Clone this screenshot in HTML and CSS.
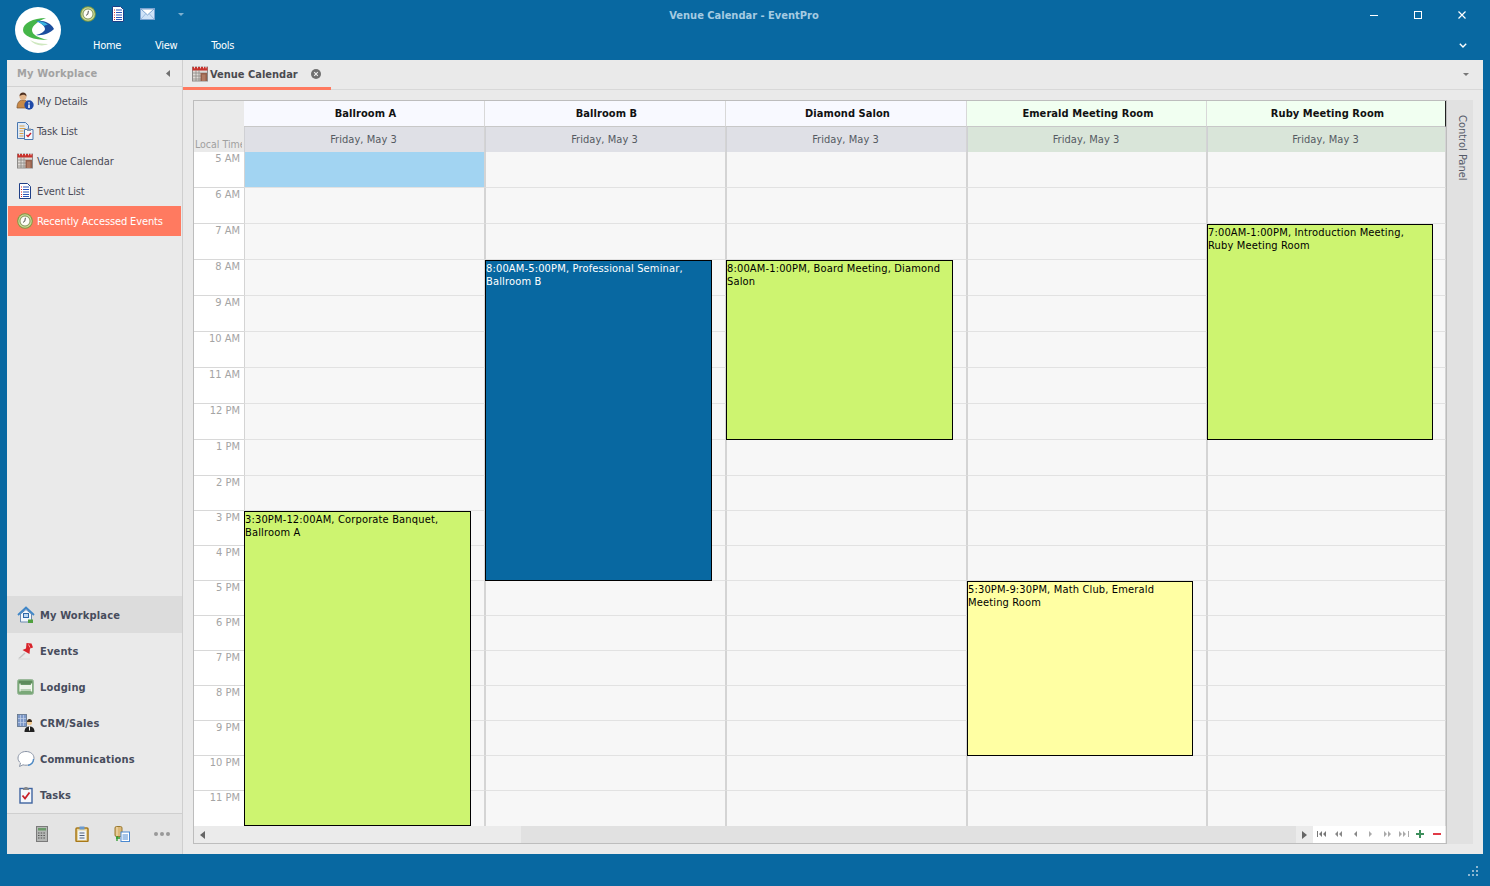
FILE: index.html
```html
<!DOCTYPE html>
<html lang="en">
<head>
<meta charset="utf-8">
<title>Venue Calendar - EventPro</title>
<link rel="stylesheet" href="styles.css">
</head>
<body>
<svg class="defs" width="0" height="0" aria-hidden="true">
  <symbol id="i-clock" viewBox="0 0 16 16">
    <circle cx="8" cy="8" r="7.8" fill="#7f9a3f"/>
    <circle cx="8" cy="8" r="6.8" fill="#c9d89a"/>
    <circle cx="8" cy="8" r="5" fill="#fdfdf6" stroke="#59702a" stroke-width=".7"/>
    <path d="M8.400 4.800 7.800 8.200 6 9.400" fill="none" stroke="#555" stroke-width="1"/>
  </symbol>
  <symbol id="i-list" viewBox="0 0 14 16">
    <path d="M1.500.5h8l3 3v12h-11z" fill="#fff" stroke="#1f3f86"/>
    <path d="M3 4h1M3 6.500h1M3 9h1M3 11.500h1M3 13.500h1" stroke="#d8262a"/>
    <path d="M5 4h6M5 6.500h6M5 9h6M5 11.500h6M5 13.500h6" stroke="#2a55b8"/>
  </symbol>
  <symbol id="i-mail" viewBox="0 0 15 12">
    <rect x=".5" y=".5" width="14" height="11" fill="#cfe3f8" stroke="#7aa3d0"/>
    <path d="M1 1l6.500 6L14 1z" fill="#fff" stroke="#7aa3d0"/>
    <path d="M1 11l4.500-5M14 11 9.500 6" stroke="#9dbce0" fill="none"/>
  </symbol>
  <symbol id="i-cal" viewBox="0 0 16 16">
    <rect x=".5" y="1" width="15" height="14" fill="#dedad6" stroke="#8d8a88"/>
    <rect x=".5" y="1" width="15" height="3.500" fill="#c8322c"/>
    <path d="M2.500.3v2M5.500.3v2M8.500.3v2M11.500.3v2M14 .3v2" stroke="#fff" stroke-width=".8"/>
    <path d="M1 7h14M1 10h14M1 13h14M4 4v11M7 4v11" stroke="#8e8a86" stroke-width=".8"/>
    <rect x="8.500" y="7" width="6.500" height="8" fill="#94604c"/>
    <rect x="10" y="8.500" width="3.500" height="6.500" fill="#b07a62"/>
  </symbol>
</svg>

<div class="app">
  <header class="titlebar">
    <div class="logo">
      <svg width="46" height="46" viewBox="0 0 46 46">
        <path d="M15 33c4 5 12 7 18 4-6 0-12-1-18-4z" fill="#cfe8c0"/>
        <path d="M31 11C18 11 8 16 8 23c0 6 10 10 25 10-9-2-16-5-16-10 0-4 6-9 14-12z" fill="#45b649"/>
        <path d="M21 14c8-1 15 2 18 8-4 4-11 7-18 6 5-1 9-4 9-6 0-3-4-6-9-8z" fill="#1c4f9f"/>
        <path d="M21 14c5 0 9 1 12 4-2 0-3 0-4 1-2-2-5-4-8-5z" fill="#39b3df"/>
      </svg>
    </div>
    <div class="titlebar-main">
      <div class="titlebar-top">
        <div class="quick">
          <svg class="ic16"><use href="#i-clock"/></svg>
          <svg class="ic-list"><use href="#i-list"/></svg>
          <svg class="ic-mail"><use href="#i-mail"/></svg>
          <svg class="ic-drop" viewBox="0 0 6 3"><path d="M0 0h6L3 3z" fill="#7fb0cf"/></svg>
        </div>
        <div class="winbtns">
          <svg viewBox="0 0 10 10"><path d="M1 5.500h8" stroke="#fff" stroke-width="1"/></svg>
          <svg viewBox="0 0 10 10"><rect x="1.500" y="1.500" width="7" height="7" fill="none" stroke="#fff"/></svg>
          <svg viewBox="0 0 10 10"><path d="M1.500 1.500l7 7M8.500 1.500l-7 7" stroke="#fff" stroke-width="1.200"/></svg>
        </div>
      </div>
      <div class="titlebar-menu">
        <nav class="menu"><span>Home</span><span>View</span><span>Tools</span></nav>
        <svg class="chev" viewBox="0 0 8 5"><path d="M.8.800 4 4 7.200.800" fill="none" stroke="#fff" stroke-width="1.400"/></svg>
      </div>
    </div>
    <div class="wintitle">Venue Calendar - EventPro</div>
  </header>

  <div class="body">
    <aside class="sidebar">
      <div class="side-head"><span>My Workplace</span><svg viewBox="0 0 4 7" class="side-arrow"><path d="M4 0v7L0 3.500z" fill="#707070"/></svg></div>
      <ul class="side-items">
        <li>
          <svg class="ic18" viewBox="0 0 18 18"><path d="M1 16c0-5 2-8 6-8s6 3 6 8z" fill="#c98a48" stroke="#7a5230" stroke-width=".7"/><circle cx="7" cy="4.500" r="3.500" fill="#e2b48a"/><path d="M3.500 4.500C3.500 1.500 5 .5 7 .5s3.500 1 3.500 4C9.500 3 8 2.500 6 3 5 3.200 4 3.500 3.500 4.500z" fill="#4f3020"/><circle cx="13" cy="13" r="4.700" fill="#1f4aa8"/><path d="M13 10.200v1.400M13 12.500v3.400" stroke="#fff" stroke-width="1.500"/></svg>
          My Details
        </li>
        <li>
          <svg class="ic18" viewBox="0 0 18 18"><path d="M1.500.5h8l3 3v13h-11z" fill="#dfeaf7" stroke="#4a78b0"/><path d="M3.500 4h5M3.500 6.500h6M3.500 9h4M3.500 11.500h4M3.500 14h4" stroke="#d9a24a"/><path d="M8.500 7.500h8.500v10H8.500z" fill="#f6f8fb" stroke="#4a78b0"/><rect x="11" y="6.500" width="4" height="2.500" fill="#8a9ab0"/><path d="M10.500 13l1.500 1.500 3-3.500" fill="none" stroke="#c8202a" stroke-width="1.400"/></svg>
          Task List
        </li>
        <li><svg class="ic18 pad1"><use href="#i-cal"/></svg>Venue Calendar</li>
        <li><svg class="ic18 pad1"><use href="#i-list"/></svg>Event List</li>
        <li class="active"><svg class="ic18 pad1"><use href="#i-clock"/></svg>Recently Accessed Events</li>
      </ul>
      <div class="side-spacer"></div>
      <ul class="side-nav">
        <li class="selected">
          <svg class="ic18" viewBox="0 0 18 18"><path d="M3.500 8v8h11V8L9 3.500z" fill="#f2f6fb" stroke="#6a8ab0"/><path d="M1 9 9 1.500 17 9" fill="none" stroke="#3f86c8" stroke-width="1.800"/><rect x="6.500" y="7.500" width="5" height="4" fill="#bcd6f0" stroke="#2f68a8"/><rect x="11" y="13.500" width="5" height="3.500" fill="#4fa03e"/></svg>
          My Workplace
        </li>
        <li>
          <svg class="ic18" viewBox="0 0 18 18"><path d="M8 11 2 16.500" stroke="#c4c4c4" stroke-width="1.400"/><path d="M1 17h12" stroke="#dcdcdc" stroke-width="1.200"/><path d="M9.500 1 14.500 1.500 16 5.500l-3 1-.5 5.500L5.500 8l3.500-1.500z" fill="#d8232a"/><path d="M11.500 2.500l1.500 3" stroke="#f6a3a3"/></svg>
          Events
        </li>
        <li>
          <svg class="ic18" viewBox="0 0 18 18"><rect x=".5" y="1.500" width="16" height="15" rx="2" fill="#7aa878" stroke="#9ab89a"/><rect x="2" y="3" width="13" height="3.500" fill="#5e8c5c"/><rect x="3" y="7" width="11.500" height="4" fill="#eef4ea"/><path d="M3 5.500v8M14.500 5.500v8M3 12h11.500" stroke="#f4f8f0" stroke-width="1.200"/></svg>
          Lodging
        </li>
        <li>
          <svg class="ic18" viewBox="0 0 18 18"><rect x=".5" y=".5" width="9" height="12" fill="#7d98c8" stroke="#5f7288" stroke-width=".8"/><path d="M3.500 1v11M6.500 1v11M1 4.500h8M1 8.500h8" stroke="#c4d2ea" stroke-width=".7"/><circle cx="12.500" cy="8.500" r="2.600" fill="#f0c890"/><path d="M10 8c0-2 1-3 2.500-3S15 6 15 8z" fill="#3a2a1a"/><path d="M7.500 18c0-4 2-5.500 5-5.500s5 1.500 5 5.500z" fill="#222"/><path d="M12 12.500h1v4h-1z" fill="#fff"/></svg>
          CRM/Sales
        </li>
        <li>
          <svg class="ic18" viewBox="0 0 18 18"><path d="M9 1.500c4.500 0 8 2.800 8 6.700s-3.500 7-8 7c-1 0-2-.1-3-.4L2.500 16.500 3.500 13C2 11.800 1 10 1 8.200 1 4.300 4.500 1.500 9 1.500z" fill="#fff" stroke="#8a94a6"/><path d="M11 15.500c3.500-.8 5.500-3.500 5.500-6.500" fill="none" stroke="#4a8ac8" stroke-width="1.200"/></svg>
          Communications
        </li>
        <li>
          <svg class="ic18" viewBox="0 0 18 18"><rect x="3" y="2.500" width="12" height="14.500" fill="#f4f7fb" stroke="#3f64a0" stroke-width="1.400"/><path d="M6 4V2.500h1.500V1h3v1.500H12V4z" fill="#8a8a8a"/><path d="M5.500 9.500l2.500 3 4.500-6" fill="none" stroke="#c8202a" stroke-width="1.800"/></svg>
          Tasks
        </li>
      </ul>
      <div class="side-foot">
        <svg class="ic16" viewBox="0 0 16 16"><rect x="2.500" y=".5" width="11" height="15" fill="#b4b6b4" stroke="#7a7a7a"/><rect x="4" y="2" width="8" height="2.500" fill="#6a9a6a"/><path d="M4 7h8M4 9.500h8M4 12h8" stroke="#555" stroke-dasharray="1.500 1.200" stroke-width="1.200"/></svg>
        <svg class="ic16" viewBox="0 0 16 16"><rect x="2" y="2" width="12" height="13.500" rx="1" fill="#e8d49a" stroke="#a87818" stroke-width="1.500"/><rect x="4" y="4.500" width="8" height="9.500" fill="#eef3f8"/><rect x="5.500" y=".5" width="5" height="3" fill="#6a9ad0"/><path d="M5.500 7h5M5.500 9.500h5M5.500 12h5" stroke="#50607a"/></svg>
        <svg class="ic16" viewBox="0 0 16 16"><rect x="1" y=".5" width="7" height="10" rx="1.500" fill="#dcb878" stroke="#9a7a30"/><path d="M3 1v9" stroke="#f2dfb8"/><rect x="7" y="6" width="8.500" height="9.500" fill="#fff" stroke="#4a88d0"/><path d="M8.500 9h5.500M8.500 11h5.500M8.500 13h5.500" stroke="#4a88d0"/><path d="M2 12h4M3 10v5" stroke="#2a9a2a" stroke-width="1.300"/></svg>
        <span class="dots"><i></i><i></i><i></i></span>
      </div>
    </aside>

    <main class="main">
      <div class="tabs">
        <div class="tab">
          <svg class="ic16"><use href="#i-cal"/></svg>
          <span class="tab-title">Venue Calendar</span>
          <svg class="tab-close" viewBox="0 0 10 10"><circle cx="5" cy="5" r="5" fill="#707070"/><path d="M3.200 3.200l3.600 3.600M6.800 3.200l-3.600 3.600" stroke="#eee" stroke-width="1.200"/></svg>
        </div>
        <svg class="tabs-drop" viewBox="0 0 6 3"><path d="M0 0h6L3 3z" fill="#777"/></svg>
      </div>
      <div class="work">
        <section class="sched">
          <div class="sched-grid">
            <div class="timecol">
              <div class="time-head"><span>Local Time</span></div>
              <div class="t t36">5 AM</div><div class="t t36">6 AM</div><div class="t t36">7 AM</div><div class="t t36">8 AM</div><div class="t t36">9 AM</div>
              <div class="t t36">10 AM</div><div class="t t36">11 AM</div><div class="t t36">12 PM</div><div class="t t36">1 PM</div><div class="t t35">2 PM</div>
              <div class="t t35">3 PM</div><div class="t t35">4 PM</div><div class="t t35">5 PM</div><div class="t t35">6 PM</div><div class="t t35">7 PM</div>
              <div class="t t35">8 PM</div><div class="t t35">9 PM</div><div class="t t35">10 PM</div><div class="t t35">11 PM</div>
            </div>

            <div class="col">
              <div class="col-name">Ballroom A</div>
              <div class="col-date">Friday, May 3</div>
              <div class="cells">
                <div class="c t36 hi"></div><div class="c t36"></div><div class="c t36"></div><div class="c t36"></div><div class="c t36"></div><div class="c t36"></div><div class="c t36"></div><div class="c t36"></div><div class="c t36"></div><div class="c t35"></div><div class="c t35"></div><div class="c t35"></div><div class="c t35"></div><div class="c t35"></div><div class="c t35"></div><div class="c t35"></div><div class="c t35"></div><div class="c t35"></div><div class="c t35"></div>
                <div class="ev green" style="top:359px;height:315px">3:30PM-12:00AM, Corporate Banquet, Ballroom A</div>
              </div>
            </div>

            <div class="col">
              <div class="col-name">Ballroom B</div>
              <div class="col-date">Friday, May 3</div>
              <div class="cells">
                <div class="c t36"></div><div class="c t36"></div><div class="c t36"></div><div class="c t36"></div><div class="c t36"></div><div class="c t36"></div><div class="c t36"></div><div class="c t36"></div><div class="c t36"></div><div class="c t35"></div><div class="c t35"></div><div class="c t35"></div><div class="c t35"></div><div class="c t35"></div><div class="c t35"></div><div class="c t35"></div><div class="c t35"></div><div class="c t35"></div><div class="c t35"></div>
                <div class="ev blue" style="top:108px;height:321px">8:00AM-5:00PM, Professional Seminar, Ballroom B</div>
              </div>
            </div>

            <div class="col">
              <div class="col-name">Diamond Salon</div>
              <div class="col-date">Friday, May 3</div>
              <div class="cells">
                <div class="c t36"></div><div class="c t36"></div><div class="c t36"></div><div class="c t36"></div><div class="c t36"></div><div class="c t36"></div><div class="c t36"></div><div class="c t36"></div><div class="c t36"></div><div class="c t35"></div><div class="c t35"></div><div class="c t35"></div><div class="c t35"></div><div class="c t35"></div><div class="c t35"></div><div class="c t35"></div><div class="c t35"></div><div class="c t35"></div><div class="c t35"></div>
                <div class="ev green" style="top:108px;height:180px">8:00AM-1:00PM, Board Meeting, Diamond Salon</div>
              </div>
            </div>

            <div class="col alt">
              <div class="col-name">Emerald Meeting Room</div>
              <div class="col-date">Friday, May 3</div>
              <div class="cells">
                <div class="c t36"></div><div class="c t36"></div><div class="c t36"></div><div class="c t36"></div><div class="c t36"></div><div class="c t36"></div><div class="c t36"></div><div class="c t36"></div><div class="c t36"></div><div class="c t35"></div><div class="c t35"></div><div class="c t35"></div><div class="c t35"></div><div class="c t35"></div><div class="c t35"></div><div class="c t35"></div><div class="c t35"></div><div class="c t35"></div><div class="c t35"></div>
                <div class="ev yellow" style="top:429px;height:175px">5:30PM-9:30PM, Math Club, Emerald Meeting Room</div>
              </div>
            </div>

            <div class="col alt last">
              <div class="col-name">Ruby Meeting Room</div>
              <div class="col-date">Friday, May 3</div>
              <div class="cells">
                <div class="c t36"></div><div class="c t36"></div><div class="c t36"></div><div class="c t36"></div><div class="c t36"></div><div class="c t36"></div><div class="c t36"></div><div class="c t36"></div><div class="c t36"></div><div class="c t35"></div><div class="c t35"></div><div class="c t35"></div><div class="c t35"></div><div class="c t35"></div><div class="c t35"></div><div class="c t35"></div><div class="c t35"></div><div class="c t35"></div><div class="c t35"></div>
                <div class="ev green" style="top:72px;height:216px">7:00AM-1:00PM, Introduction Meeting, Ruby Meeting Room</div>
              </div>
            </div>
          </div>
          <div class="scrollbar">
            <div class="sb-track"><svg class="tri" viewBox="0 0 5 8"><path d="M5 0v8L0 4z" fill="#666"/></svg></div>
            <div class="sb-thumb"></div>
            <div class="sb-right"><svg class="tri" viewBox="0 0 5 8"><path d="M0 0v8l5-4z" fill="#666"/></svg></div>
            <div class="sb-nav">
              <svg class="w10" viewBox="0 0 10 6"><path d="M0 0h1v6H0zM5 0v6L2 3zM9 0v6L6 3z" fill="#777"/></svg>
              <svg class="w8" viewBox="0 0 8 6"><path d="M4 0v6L1 3zM8 0v6L5 3z" fill="#888"/></svg>
              <svg class="w4" viewBox="0 0 4 6"><path d="M4 0v6L1 3z" fill="#888"/></svg>
              <svg class="w4" viewBox="0 0 4 6"><path d="M0 0v6l3-3z" fill="#aaa"/></svg>
              <svg class="w8" viewBox="0 0 8 6"><path d="M0 0v6l3-3zM4 0v6l3-3z" fill="#aaa"/></svg>
              <svg class="w10" viewBox="0 0 10 6"><path d="M0 0v6l3-3zM4 0v6l3-3zM9 0h1v6H9z" fill="#aaa"/></svg>
              <svg class="sq" viewBox="0 0 8 8"><path d="M3 0h2v3h3v2H5v3H3V5H0V3h3z" fill="#3d8f5c"/></svg>
              <svg class="sq" viewBox="0 0 8 8"><path d="M0 3h8v2H0z" fill="#e03a46"/></svg>
            </div>
          </div>
        </section>
        <div class="control"><span>Control Panel</span></div>
      </div>
    </main>
  </div>

  <footer class="statusbar">
    <svg class="grip" viewBox="0 0 10 10"><path d="M8 0h2v2H8zM4 4h2v2H4zM8 4h2v2H8zM0 8h2v2H0zM4 8h2v2H4zM8 8h2v2H8z" fill="#8fb8d2"/></svg>
  </footer>
</div>
</body>
</html>
```
FILE: styles.css
```css
* { box-sizing: border-box; }
html, body { margin: 0; height: 100%; }
body {
  background: #0868a1;
  font-family: "DejaVu Sans Condensed", "DejaVu Sans", sans-serif;
  font-stretch: condensed;
  font-size: 11px;
  color: #4a4a58;
  overflow: hidden;
}
.defs { position: absolute; }
.app { display: grid; grid-template-rows: 60px 794px 32px; width: 1490px; height: 886px; }

/* title bar */
.titlebar { display: flex; color: #fff; position: relative; }
.logo { width: 46px; height: 46px; margin: 7px 0 0 15px; border-radius: 50%; background: #fff; }
.logo svg { display: block; }
.titlebar-main { flex: 1; display: flex; flex-direction: column; min-width: 0; }
.titlebar-top { height: 30px; display: flex; }
.quick { display: flex; align-items: center; padding: 0 0 2px 19px; }
.ic16 { width: 16px; height: 16px; flex: none; }
.ic18 { width: 18px; height: 18px; flex: none; }
.pad1 { padding: 1px; }
.ic-list { width: 14px; height: 16px; margin-left: 15px; }
.ic-mail { width: 15px; height: 12px; margin-left: 15px; }
.ic-drop { width: 6px; height: 3px; margin-left: 23px; }
.wintitle {
  position: absolute; left: 0; right: 2px; top: 9px;
  text-align: center; font-weight: 700; color: #a4cbe2; line-height: 14px;
}
.winbtns { margin-left: auto; display: flex; gap: 34px; align-items: center; padding: 0 23px 0 0; }
.winbtns svg { width: 10px; height: 10px; }
.titlebar-menu { height: 30px; display: flex; align-items: center; padding: 0 23px 0 0; justify-content: space-between; }
.menu { display: flex; margin-left: 32px; color: #fff; letter-spacing: -.3px; }
.menu span { margin-right: 34px; }
.chev { width: 8px; height: 5px; }

/* body */
.body { display: flex; margin: 0 7px; background: #eaeaea; }
.sidebar { width: 176px; flex: none; display: flex; flex-direction: column; border-right: 1px solid #cfcfcf; }
.side-head {
  height: 27px; border-bottom: 1px solid #d2d2d2; display: flex; align-items: center; justify-content: space-between;
  padding: 0 12px 0 10px; font-weight: 700; color: #a2a2a2; letter-spacing: .17px; flex: none;
}
.side-arrow { width: 4px; height: 7px; }
.side-items, .side-nav { list-style: none; margin: 0; padding: 0; }
.side-items { margin-top: -1px; }
.side-items li { height: 30px; display: flex; align-items: center; gap: 3px; padding: 0 0 0 9px; letter-spacing: -.12px; }
.side-items li.active { background: #ff7a60; color: #fff; margin: 0 1px; padding-left: 8px; }
.side-spacer { flex: 1; }
.side-nav li { height: 36px; display: flex; align-items: center; gap: 5px; padding: 0 0 0 10px; font-weight: 700; color: #474c5c; letter-spacing: .15px; }
.side-nav li.selected { height: 37px; background: #dcdcdc; padding-top: 1px; }
.side-foot {
  height: 41px; border-top: 1px solid #cfcfcf; background: #e4e4e4; display: flex; align-items: center;
  padding: 0 0 0 27px; gap: 24px; flex: none;
}
.dots { display: flex; gap: 2px; }
.dots i { width: 4px; height: 4px; border-radius: 50%; background: #999; }

/* main */
.main { flex: 1; min-width: 0; display: flex; flex-direction: column; }
.tabs { height: 30px; border-bottom: 1px solid #d8d8d8; display: flex; align-items: center; justify-content: space-between; padding-right: 14px; flex: none; }
.tab {
  height: 30px; width: 148px; display: flex; align-items: center; padding: 2px 0 0 9px; gap: 2px;
  border-bottom: 3px solid #ff7a60; font-weight: 700; color: #4a4a50;
}
.tab-title { white-space: nowrap; }
.tab-close { width: 10px; height: 10px; margin-left: 11px; }
.tabs-drop { width: 6px; height: 3px; }
.work { flex: 1; display: flex; padding: 10px; min-height: 0; align-items: flex-start; }

/* scheduler */
.sched { width: 1254px; height: 744px; border: 1px solid #bdbdbd; display: flex; flex-direction: column; background: #eaeaea; }
.sched-grid { display: grid; grid-template-columns: 50px 241px 241px 241px 240px 239px; height: 725px; flex: none; }
.time-head {
  height: 51px; width: 48px; display: flex; align-items: flex-end; padding: 0 0 1px 1px; color: #a0a0a0; font-size: 10.5px;
  white-space: nowrap; overflow: hidden; line-height: 13px;
}
.t { background: #fff; text-align: right; color: #a4a4a4; padding: 0 4px 0 0; border-bottom: 1px solid #d8d8d8; line-height: 13px; }
.t36 { height: 36px; }
.t35 { height: 35px; }
.timecol .t:last-child, .cells .c:nth-last-child(2) { border-bottom: 0; }
.col { display: flex; flex-direction: column; min-width: 0; }
.col-name {
  height: 26px; background: #f8f9ff; font-weight: 700; color: #111; text-align: center; line-height: 25px; letter-spacing: .07px;
  border-right: 1px solid #d8d8d8; border-bottom: 1px solid #c8c8c8; padding-left: 3px;
}
.col-date {
  height: 25px; background: #dfe0e6; color: #555a62; text-align: center; line-height: 25px; letter-spacing: .05px;
  border-left: 1px solid #cfd0d4; border-right: 1px solid #d4d4d4; padding-right: 2px;
}
.col.alt .col-name { background: #f1fff1; }
.col.alt .col-date { background: #d9e5d9; }
.col.last .col-name { border-right: 1px solid #222; }
.cells { position: relative; height: 674px; }
.c { background: #f7f7f7; border-left: 1px solid #d4d4d4; border-right: 1px solid #d4d4d4; border-bottom: 1px solid #e2e2e2; }
.c.hi { background: #a2d4f2; }
.ev {
  position: absolute; left: 0; width: 227px; border: 1px solid #000; color: #000;
  padding: 1px 4px 0 0; line-height: 13px; letter-spacing: .16px;
}
.col.alt .ev { width: 226px; }
.green { background: #cdf470; }
.yellow { background: #ffffa3; }
.blue { background: #0868a1; color: #fff; }

/* bottom scrollbar */
.scrollbar { flex: 1; display: flex; align-items: stretch; }
.sb-track { width: 328px; background: #ebebeb; display: flex; align-items: center; padding-left: 6px; }
.sb-thumb { width: 776px; background: #e1e1e1; }
.sb-right { width: 17px; background: #ebebeb; display: flex; align-items: center; justify-content: center; padding-left: 1px; }
.tri { width: 5px; height: 8px; }
.sb-nav { flex: 1; background: #fff; display: grid; grid-template-columns: repeat(8, 16.4px); align-items: center; justify-items: center; margin-right: 1px; padding: 0 0 1px 1px; }
.sb-nav svg { height: 6px; }
.sb-nav .w10 { width: 10px; }
.sb-nav .w8 { width: 8px; }
.sb-nav .w4 { width: 4px; }
.sb-nav .sq { width: 8px; height: 8px; }

.control { width: 26px; height: 744px; background: #e1e1e1; display: flex; justify-content: center; padding: 15px 0 0 5px; flex: none; }
.control span { writing-mode: vertical-rl; color: #555a68; white-space: nowrap; }

/* status */
.statusbar { display: flex; justify-content: flex-end; align-items: center; padding: 0 12px 0 0; }
.grip { width: 10px; height: 10px; margin-top: 2px; }
```
